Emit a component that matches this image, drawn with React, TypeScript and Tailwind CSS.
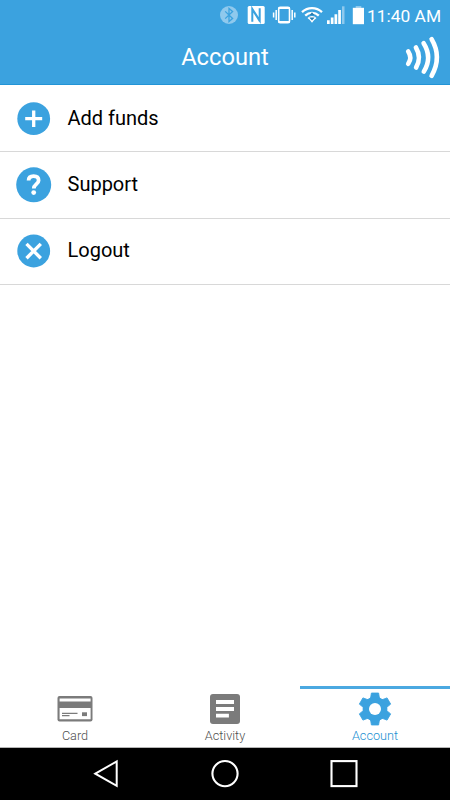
import React from "react";

const PlusIcon = () => (
  <svg width="36" height="36" viewBox="0 0 36 36">
    <circle cx="17.7" cy="17.7" r="16.4" fill="#3ba2df" />
    <path d="M17.7 9.4V26M9.2 17.7h17" stroke="#fff" strokeWidth="3.3" />
  </svg>
);

const QuestionIcon = () => (
  <svg width="36" height="36" viewBox="0 0 36 36">
    <circle cx="17.7" cy="17.8" r="17.5" fill="#3ba2df" />
    <path
      d="M12.6 13.6c0-3 2-4.4 5-4.4 3.1 0 5 1.6 5 4.2 0 3.6-4.8 3.9-4.8 8"
      fill="none"
      stroke="#fff"
      strokeWidth="3.8"
    />
    <circle cx="17.7" cy="25.6" r="2.4" fill="#fff" />
  </svg>
);

const CrossIcon = () => (
  <svg width="36" height="36" viewBox="0 0 36 36">
    <circle cx="17.7" cy="18" r="16.4" fill="#3ba2df" />
    <path d="M10.5 10.9l14.3 14.3M24.8 10.9L10.5 25.2" stroke="#fff" strokeWidth="3.4" />
  </svg>
);

const CardIcon = () => (
  <svg width="36" height="36" viewBox="0 0 36 36">
    <rect x="0.5" y="5" width="35" height="25.5" rx="2" fill="#7b7b7b" />
    <path d="M2.6 7.6h31v3h-31zM2.6 17h31v11.3h-31z" fill="#fff" />
    <path d="M5 22.3h15.5M5 24.7h7.5" stroke="#7b7b7b" strokeWidth="1.2" />
    <rect x="25" y="21.3" width="5" height="3.8" fill="#7b7b7b" />
  </svg>
);

const ActivityIcon = () => (
  <svg width="36" height="36" viewBox="0 0 36 36">
    <rect x="3" y="3" width="30" height="30" rx="3" fill="#7b7b7b" />
    <path d="M9 8.9h18v4.1H9zM9 15.9h18V20H9zM9 22.7h12.9v3.9H9z" fill="#fff" />
  </svg>
);

const GearIcon = () => (
  <svg width="36" height="36" viewBox="0 0 36 36">
    <g fill="#3ba2df" stroke="#3ba2df" strokeWidth="0.8" strokeLinejoin="round">
      <circle cx="18" cy="18" r="12" />
      {[0, 60, 120, 180, 240, 300].map((angle) => (
        <path key={angle} d="M14.4 2h7.2l1 6h-9.2z" transform={`rotate(${angle} 18 18)`} />
      ))}
    </g>
    <circle cx="18" cy="18" r="6" fill="#fff" />
  </svg>
);

const StatusBar = () => (
  <div className="flex h-[30px] items-center justify-end pr-[9px] text-white">
    {/* bluetooth */}
    <svg width="20" height="20" viewBox="0 0 20 20" className="mr-2">
      <circle cx="10" cy="10" r="9" fill="#8fc9ed" />
      <path
        d="M6.2 6.4l7.4 7.1-3.6 3V3.5l3.6 3-7.4 7.1"
        fill="none"
        stroke="#3ba2df"
        strokeWidth="1.3"
      />
    </svg>
    {/* nfc */}
    <svg width="18" height="20" viewBox="0 0 18 20" className="mr-[7px]">
      <rect x="0.7" y="1" width="17" height="18" rx="1.5" fill="#fff" />
      <path
        d="M5.3 16.8V4l7.4 11.6V3.2M5 3.8l7.8 12.4"
        fill="none"
        stroke="#3ba2df"
        strokeWidth="2"
      />
    </svg>
    {/* vibrate */}
    <svg width="24" height="20" viewBox="0 0 24 20" className="mr-[5px]">
      <rect x="6.7" y="2.2" width="10.8" height="15.6" rx="1.5" fill="none" stroke="#fff" strokeWidth="1.6" />
      <path d="M6.5 3h11.2M6.5 17h11.2" stroke="#fff" strokeWidth="2.2" />
      <path d="M4.2 5v10M1.6 7.5v5M20.2 5v10M22.8 7.5v5" stroke="#fff" strokeWidth="1.5" />
    </svg>
    {/* wifi */}
    <svg width="22" height="20" viewBox="0 0 22 20" className="mr-1">
      <g fill="none" stroke="#fff" strokeWidth="2.3">
        <path d="M1 7.2c5.7-5.4 14.3-5.4 20 0" />
        <path d="M4.2 10.6c3.9-3.7 9.7-3.7 13.6 0" />
        <path d="M7.3 13.8c2.1-2.1 5.3-2.1 7.4 0" />
      </g>
      <path d="M8 14h6l-3 3.8z" fill="#fff" />
      <path d="M11 7.2l2.6 3H8.4zM11 15.6l2.6-3H8.4z" fill="#287daf" />
    </svg>
    {/* signal */}
    <svg width="18" height="20" viewBox="0 0 18 20" className="mr-[7px]">
      <path d="M0 15.2h2.7v3.8H0zM3.8 12.5h2.7V19H3.8zM7.5 9.2h2.7V19H7.5zM11.2 5h2.7v14h-2.7z" fill="#fff" />
      <path d="M15 1.3h2.5V19H15z" fill="#8fc9ed" />
    </svg>
    {/* battery */}
    <svg width="12" height="20" viewBox="0 0 12 20" className="mr-[3px]">
      <path d="M3.7 1h5.6v2H3.7z" fill="#8fc9ed" />
      <path d="M0.8 2.8h11.2v16.4H0.8z" fill="#fff" />
    </svg>
    <span className="w-[74px] whitespace-nowrap pt-0.5 text-[17.4px] leading-[30px]">11:40 AM</span>
  </div>
);

const menuItems = [
  { label: "Add funds", icon: <PlusIcon /> },
  { label: "Support", icon: <QuestionIcon /> },
  { label: "Logout", icon: <CrossIcon /> },
];

const tabs = [
  { label: "Card", icon: <CardIcon />, active: false },
  { label: "Activity", icon: <ActivityIcon />, active: false },
  { label: "Account", icon: <GearIcon />, active: true },
];

export default function App() {
  return (
    <div className="flex h-[800px] w-[450px] flex-col overflow-hidden bg-white font-[Roboto,sans-serif]">
      <header className="h-[85px] shrink-0 border-b border-[#2294d6] bg-[#3ba2df]">
        <StatusBar />
        <div className="grid h-[54px] grid-cols-[60px_1fr_60px] items-center">
          <div />
          <h1 className="text-center text-[23.7px] leading-[54px] text-white">Account</h1>
          <svg width="60" height="54" viewBox="0 0 60 54">
            <g fill="none" stroke="#fff" strokeWidth="4.6" strokeLinecap="round">
              <path d="M18.2 21.5q4.2 6.2 0 12.3" />
              <path d="M25.9 17.5q6 10 .2 20" />
              <path d="M33.6 13.2q9 14.3.2 28.4" />
              <path d="M41.6 9.2q10.6 18 0 36.6" />
            </g>
          </svg>
        </div>
      </header>

      <main className="flex-1 pt-px">
        {menuItems.map((item) => (
          <div
            key={item.label}
            className="flex h-[66.33px] items-center gap-[15.5px] border-b border-[#d8d8d8] pl-4"
          >
            {item.icon}
            <span className="pb-0.5 text-[20px] leading-6 text-black">{item.label}</span>
          </div>
        ))}
      </main>

      <nav className="grid h-[62px] shrink-0 grid-cols-3 border-b border-[#b5b5b5]">
        {tabs.map((tab) => (
          <div
            key={tab.label}
            className={
              tab.active
                ? "flex flex-col items-center border-t-[3px] border-[#4ba9e1] text-[#1b8fd2]"
                : "flex flex-col items-center border-t-[3px] border-transparent text-[#505050]"
            }
          >
            <div className="mt-0.5 h-9">{tab.icon}</div>
            <span className="mt-px text-[12.7px] font-light leading-4">{tab.label}</span>
          </div>
        ))}
      </nav>

      <footer className="grid h-[52px] shrink-0 grid-cols-[90px_30px_90px_30px_90px_30px] items-center bg-black">
        <svg width="30" height="30" viewBox="0 0 30 30" className="col-start-2">
          <path d="M5.3 14.7L26.7 2.5v24.4z" fill="none" stroke="#fff" strokeWidth="2" />
        </svg>
        <svg width="30" height="30" viewBox="0 0 30 30" className="col-start-4">
          <circle cx="15" cy="14.6" r="12.6" fill="none" stroke="#fff" strokeWidth="2.1" />
        </svg>
        <svg width="30" height="30" viewBox="0 0 30 30" className="col-start-6">
          <rect x="1.5" y="2.1" width="25" height="25" fill="none" stroke="#fff" strokeWidth="2.1" />
        </svg>
      </footer>
    </div>
  );
}
